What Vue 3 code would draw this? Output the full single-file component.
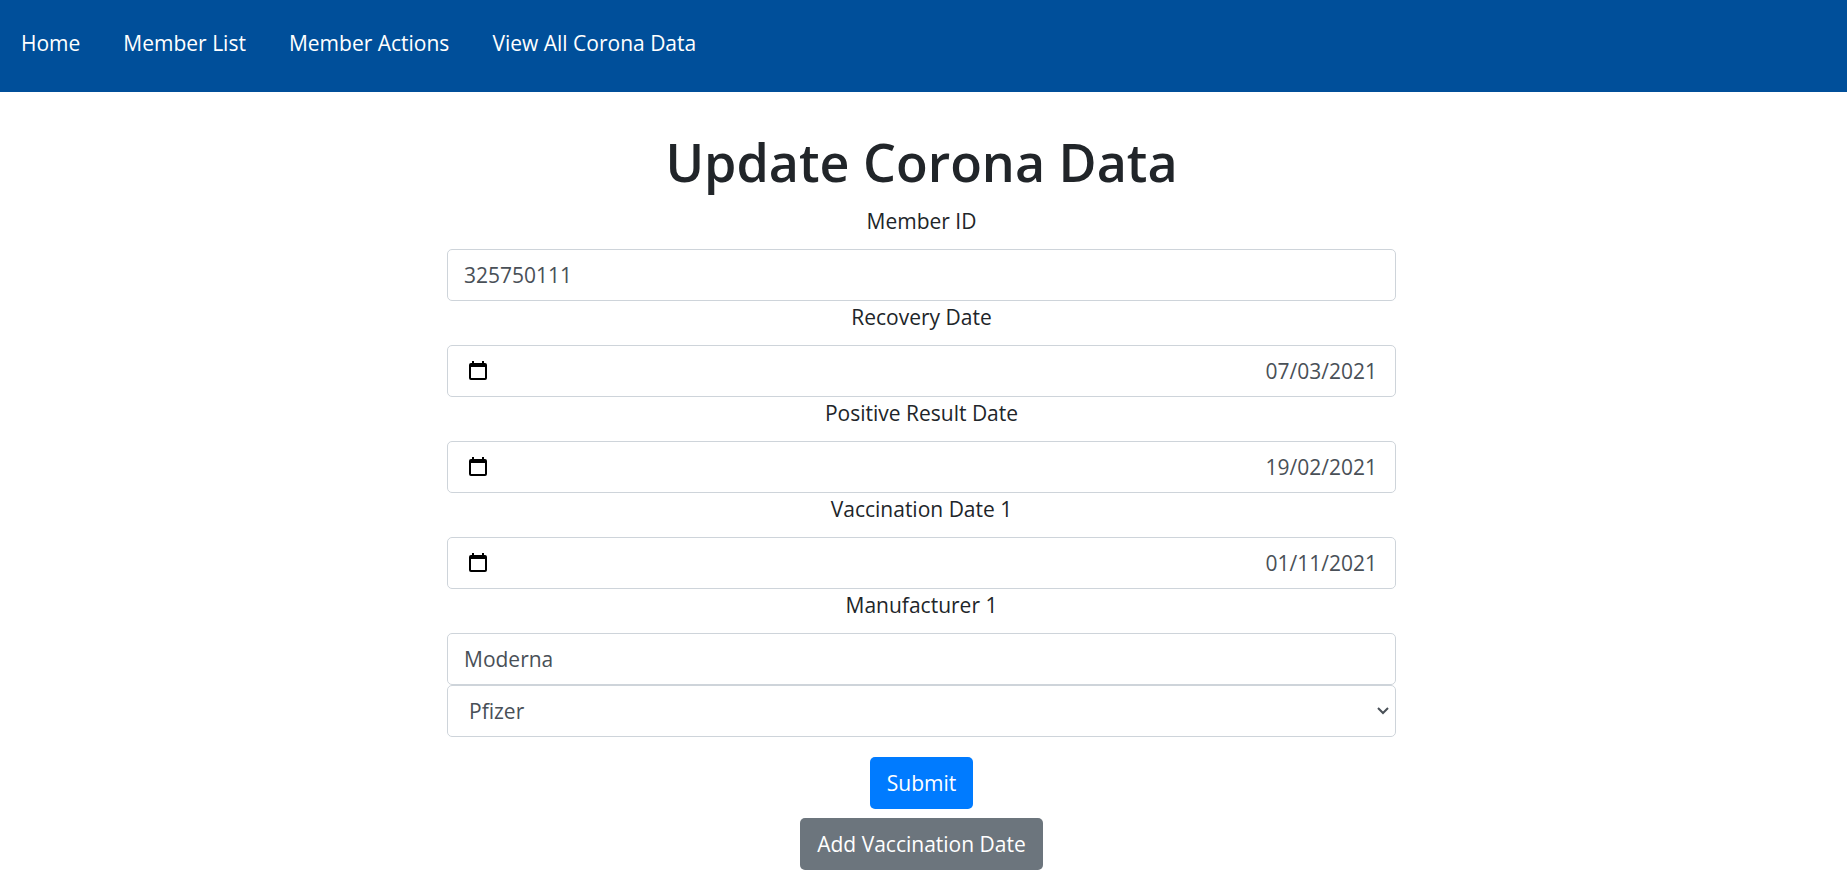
<script setup>
import { reactive } from 'vue'

const links = ['Home', 'Member List', 'Member Actions', 'View All Corona Data']

const form = reactive({
  memberId: '325750111',
  manufacturer: 'Moderna',
  option: 'Pfizer',
})

const dates = reactive([
  { id: 'recovery', label: 'Recovery Date', value: '07/03/2021' },
  { id: 'positive', label: 'Positive Result Date', value: '19/02/2021' },
  { id: 'vaccination-1', label: 'Vaccination Date 1', value: '01/11/2021' },
])
</script>

<template>
  <div class="page">
    <nav class="navbar">
      <a v-for="link in links" :key="link" href="#">{{ link }}</a>
    </nav>

    <main class="content">
      <h1>Update Corona Data</h1>
      <form class="form" @submit.prevent>
        <label for="member-id">Member ID</label>
        <input id="member-id" v-model="form.memberId" class="control" type="text" />

        <template v-for="date in dates" :key="date.id">
          <label :for="date.id">{{ date.label }}</label>
          <div class="control date">
            <button class="picker" type="button" :aria-label="'Choose ' + date.label">
              <svg viewBox="0 0 18 20" width="18" height="20" aria-hidden="true">
                <path
                  fill-rule="evenodd"
                  d="M3 0h2v2h8V0h2v2h1q2 0 2 2v13q0 2-2 2H2q-2 0-2-2V4q0-2 2-2h1zM2 6v11h14V6z"
                />
              </svg>
            </button>
            <input :id="date.id" v-model="date.value" type="text" inputmode="numeric" />
          </div>
        </template>

        <label for="manufacturer">Manufacturer 1</label>
        <input id="manufacturer" v-model="form.manufacturer" class="control" type="text" />
        <div class="select-wrap">
          <select v-model="form.option" class="control" aria-label="Select manufacturer">
            <option>Pfizer</option>
            <option>Moderna</option>
          </select>
          <svg class="chevron" viewBox="0 0 12 8" width="12" height="8" aria-hidden="true">
            <path d="M1 1l5 5 5-5" fill="none" stroke="#495057" stroke-width="2" />
          </svg>
        </div>

        <div class="actions">
          <button class="btn primary" type="submit">Submit</button>
          <button class="btn secondary" type="button">Add Vaccination Date</button>
        </div>
      </form>
    </main>
  </div>
</template>

<style>
body {
  margin: 0;
  background: #fff;
}
</style>

<style scoped>
.page,
.page * {
  box-sizing: border-box;
}

.page {
  font: 21px/33px "Open Sans", "Noto Sans", sans-serif;
  color: #212529;
}

.navbar {
  display: flex;
  gap: 43px;
  padding: 27px 21px 32px;
  background: #004f9a;
}

.navbar a {
  color: #fff;
  text-decoration: none;
}

.content {
  display: flex;
  flex-direction: column;
  align-items: center;
  padding: 37px 4px 0 0;
}

h1 {
  margin: 0 0 11px;
  font-size: 52px;
  line-height: 65px;
  font-weight: 600;
}

.form {
  display: flex;
  flex-direction: column;
  width: 100%;
  max-width: 949px;
}

label {
  align-self: center;
  margin-bottom: 11px;
}

.control {
  width: 100%;
  height: 52px;
  padding: 0 16px;
  border: 1px solid #ced4da;
  border-radius: 5px;
  background: #fff;
  color: #495057;
  font: inherit;
}

.date {
  display: flex;
  align-items: center;
  padding: 0 18px 0 21px;
}

.date input {
  flex: 1;
  min-width: 0;
  padding: 0;
  border: 0;
  background: none;
  color: inherit;
  font: inherit;
  text-align: right;
}

.picker {
  display: flex;
  padding: 0;
  border: 0;
  background: none;
  color: #000;
}

.select-wrap {
  position: relative;
}

select.control {
  display: block;
  appearance: none;
  padding: 0 40px 0 21px;
}

.chevron {
  position: absolute;
  right: 7px;
  top: 22px;
  pointer-events: none;
}

.actions {
  display: flex;
  flex-direction: column;
  align-items: center;
  gap: 9px;
  padding: 20px 0 2px;
}

.btn {
  height: 52px;
  padding: 0 17px;
  border: 0;
  border-radius: 5px;
  color: #fff;
  font: inherit;
}

.primary {
  background: #007bff;
}

.secondary {
  background: #6c757d;
}
</style>
